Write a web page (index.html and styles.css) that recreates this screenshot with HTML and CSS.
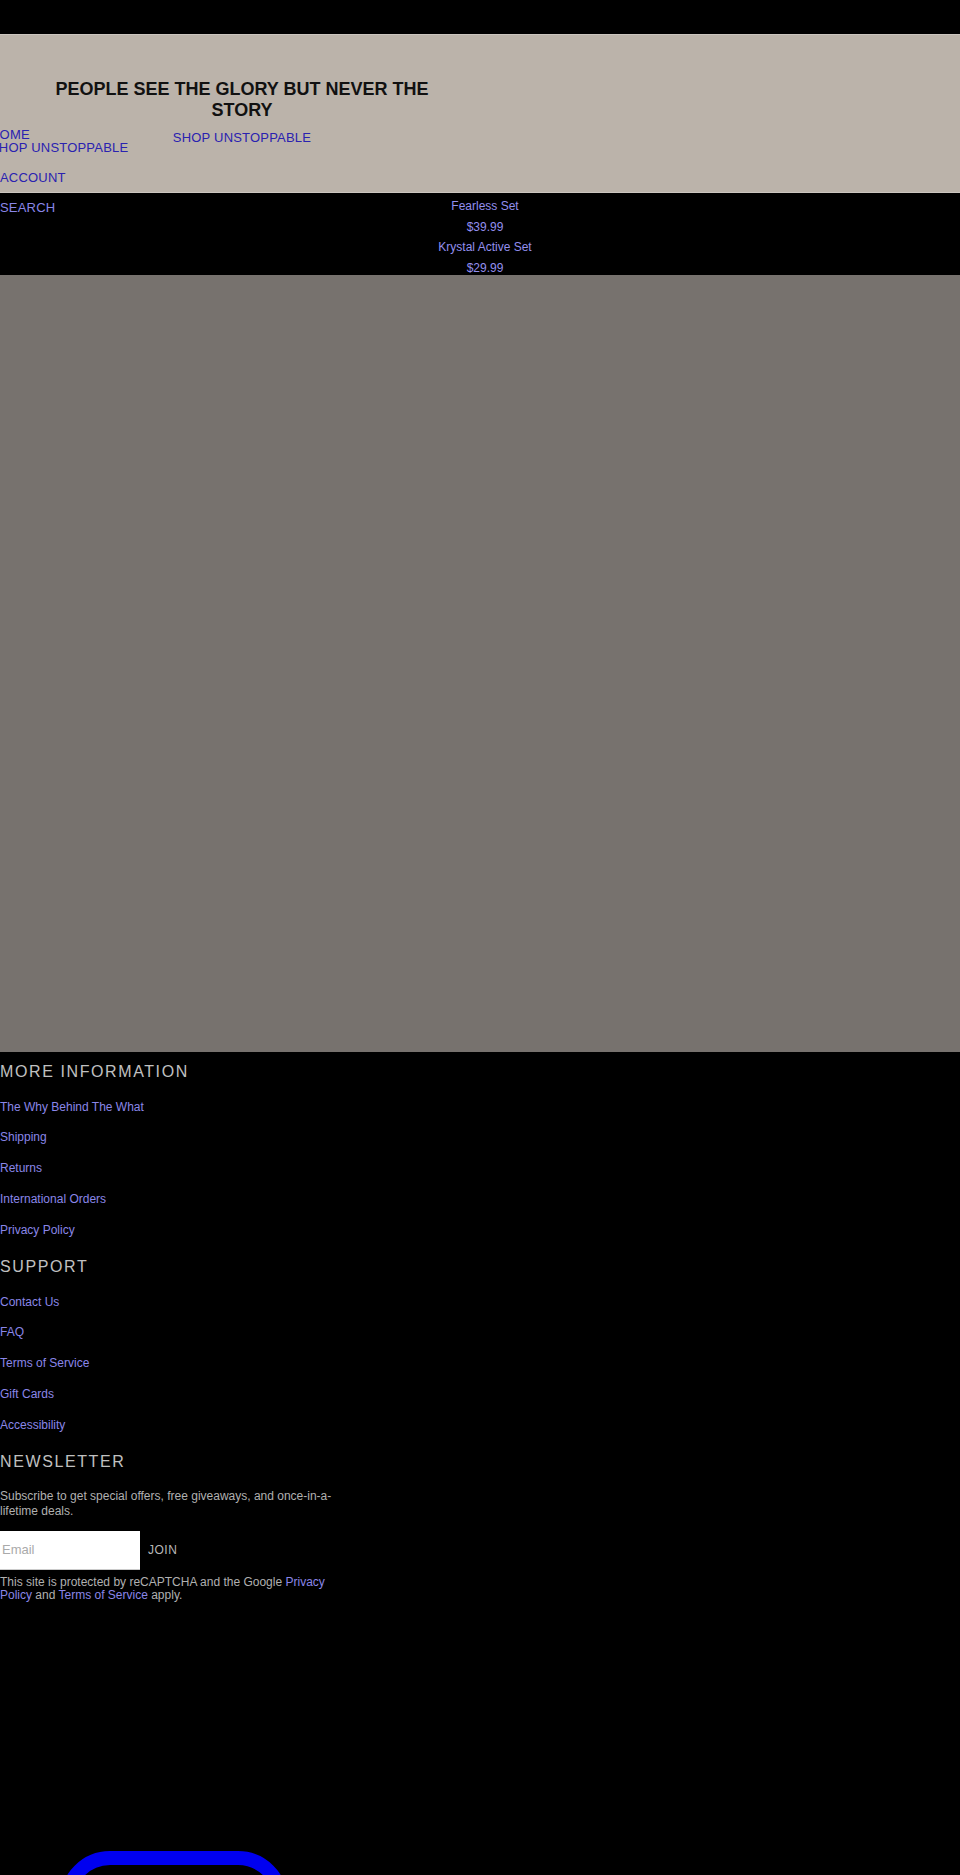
FILE: index.html
```html
<!DOCTYPE html>
<html lang="en">
<head>
    <meta charset="UTF-8">
    <meta name="viewport" content="width=device-width, initial-scale=1.0">
    <title>People See The Glory</title>
    <link rel="stylesheet" href="styles.css">
</head>
<body>

    <div class="top-bar"></div>

    <!-- Header -->
    <header class="header">
        <div class="header-main">
            <h1 class="tagline">PEOPLE SEE THE GLORY BUT NEVER THE STORY</h1>
            <a href="#" class="shop-link">SHOP UNSTOPPABLE</a>
        </div>

        <!-- Site nav spills over the header -->
        <ul class="site-nav">
            <li class="nav-shift"><a href="#">HOME</a></li>
            <li class="nav-shift"><a href="#">SHOP UNSTOPPABLE</a></li>
            <li class="nav-gap"><a href="#">ACCOUNT</a></li>
            <li class="nav-gap nav-dark"><a href="#">SEARCH</a></li>
        </ul>
    </header>

    <!-- Products -->
    <section class="products">
        <div class="product-list">
            <a href="#" class="product-line">Fearless Set</a>
            <a href="#" class="product-line">$39.99</a>
            <a href="#" class="product-line">Krystal Active Set</a>
            <a href="#" class="product-line">$29.99</a>
        </div>
    </section>

    <div class="hero"></div>

    <!-- Footer -->
    <footer class="footer">
        <h3 class="footer-title">MORE INFORMATION</h3>
        <ul class="footer-links">
            <li><a href="#">The Why Behind The What</a></li>
            <li><a href="#">Shipping</a></li>
            <li><a href="#">Returns</a></li>
            <li><a href="#">International Orders</a></li>
            <li><a href="#">Privacy Policy</a></li>
        </ul>

        <h3 class="footer-title">SUPPORT</h3>
        <ul class="footer-links">
            <li><a href="#">Contact Us</a></li>
            <li><a href="#">FAQ</a></li>
            <li><a href="#">Terms of Service</a></li>
            <li><a href="#">Gift Cards</a></li>
            <li><a href="#">Accessibility</a></li>
        </ul>

        <h3 class="footer-title">NEWSLETTER</h3>
        <p class="newsletter-text">Subscribe to get special offers, free giveaways, and once-in-a-lifetime deals.</p>
        <form class="newsletter-form" onsubmit="return false;">
            <input type="email" placeholder="Email">
            <button type="submit">JOIN</button>
        </form>
        <p class="captcha-note">This site is protected by reCAPTCHA and the Google <a href="#">Privacy Policy</a> and <a href="#">Terms of Service</a> apply.</p>

        <div class="chat-ring"></div>
    </footer>

</body>
</html>
```

FILE: styles.css
```css
body {
    font-family: "Liberation Sans", Arial, sans-serif;
    background-color: #000;
    margin: 0;
    overflow: hidden;
}
ul {
    list-style: none;
    margin: 0;
    padding: 0;
}
a {
    text-decoration: none;
}
.top-bar {
    height: 34px;
}
.header {
    position: relative;
    box-sizing: border-box;
    height: 159px;
    background-color: #bbb3aa;
    border-top: 1px solid #cbc5bf;
    border-bottom: 1px solid #cbc5bf;
}
.header-main {
    width: 430px;
    margin-left: 27px;
    padding-top: 44px;
    text-align: center;
}
.tagline {
    margin: 0;
    font-size: 18px;
    line-height: 21px;
    font-weight: bold;
    color: #111;
}
.shop-link {
    display: inline-block;
    margin-top: 9px;
    font-size: 13px;
    line-height: 15px;
    letter-spacing: 0.2px;
    color: #2a22b0;
}
.site-nav {
    position: absolute;
    left: 0;
    top: 93px;
    font-size: 13px;
    line-height: 13px;
    letter-spacing: 0.2px;
}
.site-nav a {
    color: #2a22b0;
}
.nav-shift {
    margin-left: -10px;
}
.nav-gap {
    margin-top: 17px;
}
.nav-dark a {
    color: #8a86e8;
}
.products {
    height: 82px;
    padding-top: 3px;
    box-sizing: border-box;
}
.product-list {
    width: 140px;
    margin-left: 415px;
    display: flex;
    flex-direction: column;
    align-items: center;
}
.product-line {
    font-size: 12px;
    line-height: 20.5px;
    color: #938fee;
}
.hero {
    height: 777px;
    background-color: #77726e;
}
.footer {
    padding-top: 9px;
}
.footer-title {
    margin: 0;
    font-size: 16px;
    line-height: 22px;
    font-weight: normal;
    letter-spacing: 1.6px;
    color: #c0c0c0;
}
.footer-links {
    display: flex;
    flex-direction: column;
    gap: 15.8px;
    margin: 16.5px 0 18.5px;
    font-size: 12px;
    line-height: 15px;
}
.footer-links a {
    color: #8a86e8;
}
.newsletter-text {
    width: 340px;
    margin: 15.5px 0 0;
    font-size: 12px;
    line-height: 15.5px;
    color: #b0b0b0;
}
.newsletter-form {
    display: flex;
    align-items: center;
    margin-top: 11px;
}
.newsletter-form input {
    box-sizing: border-box;
    width: 140px;
    height: 39px;
    margin: 0;
    padding: 0 2px;
    border: none;
    border-bottom: 1px solid #ccc;
    font-family: "Liberation Sans", Arial, sans-serif;
    font-size: 13px;
    background-color: #fff;
}
.newsletter-form input::placeholder {
    color: #aaa;
}
.newsletter-form button {
    margin-left: 8px;
    padding: 0;
    border: none;
    background: none;
    font-family: "Liberation Sans", Arial, sans-serif;
    font-size: 12px;
    letter-spacing: 0.5px;
    color: #b8b8b8;
}
.captcha-note {
    width: 335px;
    margin: 6px 0 0;
    font-size: 12px;
    line-height: 13px;
    color: #b0b0b0;
}
.captcha-note a {
    color: #8a86e8;
}
.chat-ring {
    width: 228px;
    height: 100px;
    box-sizing: border-box;
    margin: 249px 0 0 60px;
    border: 14px solid #0000f0;
    border-radius: 50px;
}
```
